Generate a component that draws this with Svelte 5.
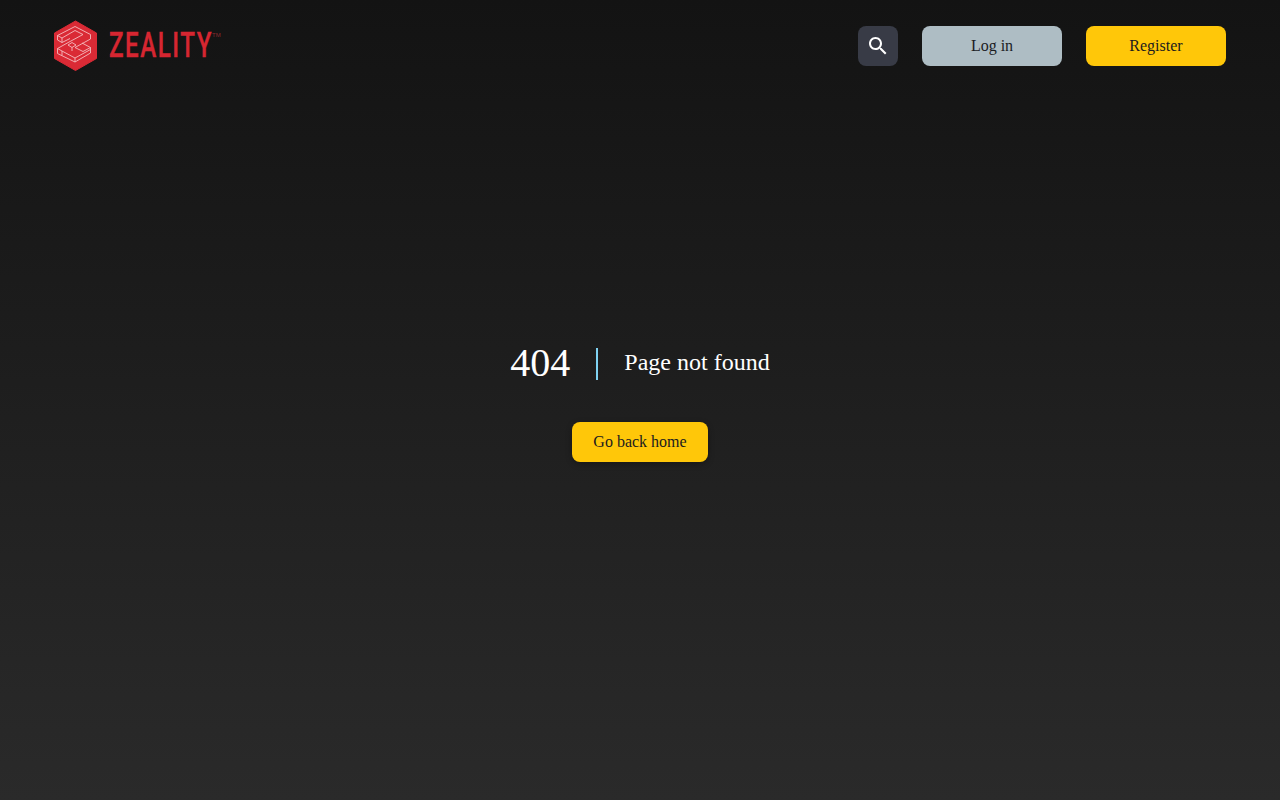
<script lang="ts">
  let query = $state("");
</script>

<div class="page">
  <header class="nav">
    <a class="brand" href="/" aria-label="Zeality">
      <svg class="mark" width="44" height="52" viewBox="0 0 44 52">
        <path d="M21.5 1 L42.5 13 V38.5 L21.5 50.5 L0.5 38.5 V13 Z" fill="#da2a35" stroke="#da2a35" stroke-linejoin="round" />
        <g fill="none" stroke="#f5bcc0" stroke-width="0.9" stroke-linejoin="round">
          <!-- top bar of the Z -->
          <path d="M3.5 15.5 L21 6.5 L36.5 14.5 V19 L21 27.5" />
          <path d="M3.5 15.5 V20 L8 22.5 L16 18.5 M3.5 15.5 L8 18 V22.5 M8 18 L21 10.5 L29 14.5 L16 21.5 L3.5 28.5" />
          <!-- bottom bar of the Z -->
          <path d="M3.5 28.5 V33.5 L21 42 L36.5 33 V27.5 L28 23" />
          <path d="M3.5 28.5 L8 31 L21 38 L36.5 29.5 M8 31 V35.5 M21 38 V42 M21 27.5 L29 31.5 L36.5 27.5" />
          <!-- crossing in the middle -->
          <path d="M14 25 L18 22.5 L22 25 L18 27.5 Z M18 27.5 V31" />
        </g>
      </svg>
      <span class="word">ZEALITY</span>
      <span class="tm">TM</span>
    </a>
    <div class="actions">
      <button class="icon" aria-label="Search" title={query}>
        <svg width="24" height="24" viewBox="0 0 24 24" fill="#fff">
          <path d="M15.5 14h-.79l-.28-.27C15.41 12.59 16 11.11 16 9.5 16 5.91 13.09 3 9.5 3S3 5.91 3 9.5 5.91 16 9.5 16c1.61 0 3.09-.59 4.23-1.57l.27.28v.79l5 4.99L20.49 19l-4.99-5zm-6 0C7.01 14 5 11.99 5 9.5S7.01 5 9.5 5 14 7.01 14 9.5 11.99 14 9.5 14z" />
        </svg>
      </button>
      <button class="btn login">Log in</button>
      <button class="btn register">Register</button>
    </div>
  </header>

  <main class="content">
    <div class="message">
      <span class="code">404</span>
      <span class="divider"></span>
      <span class="text">Page not found</span>
    </div>
    <button class="btn home">Go back home</button>
  </main>
</div>

<style>
  :global(body) {
    margin: 0;
    background: #2a2a2a;
  }

  .page {
    height: 800px;
    overflow: hidden;
    display: flex;
    flex-direction: column;
    background: linear-gradient(to bottom, #131313, #2a2a2a);
    font-family: "Liberation Serif", "Times New Roman", serif;
  }

  .nav {
    height: 92px;
    flex: none;
    box-sizing: border-box;
    padding: 0 54px;
    display: flex;
    align-items: center;
    justify-content: space-between;
  }

  .brand {
    display: flex;
    align-items: center;
    text-decoration: none;
    color: #d62631;
  }

  .mark {
    display: block;
    margin-right: 11px;
  }

  .word {
    font-family: "Roboto", "Liberation Sans", sans-serif;
    font-size: 35px;
    line-height: 32px;
    font-weight: 500;
    letter-spacing: 2.2px;
    width: 104px;
    -webkit-text-stroke: 0.4px #d62631;
    transform: scaleX(0.69);
    transform-origin: left center;
  }

  .tm {
    font-family: "Liberation Sans", sans-serif;
    font-size: 6px;
    color: #8c2a2f;
    align-self: flex-start;
    margin: 12px 0 0 -1px;
    width: 9px;
  }

  .actions {
    display: flex;
    align-items: center;
    gap: 24px;
  }

  button {
    border: none;
    padding: 0;
    font-family: inherit;
    font-size: 16px;
    cursor: pointer;
  }

  .icon {
    width: 40px;
    height: 40px;
    border-radius: 8px;
    background: #383b46;
    display: flex;
    align-items: center;
    justify-content: center;
  }

  .btn {
    height: 40px;
    border-radius: 8px;
    color: #1b1b1f;
  }

  .login {
    width: 140px;
    background: #aebdc4;
  }

  .register {
    width: 140px;
    background: #ffc709;
  }

  .content {
    display: flex;
    flex-direction: column;
    align-items: center;
    padding-top: 248px;
  }

  .message {
    display: flex;
    align-items: center;
    height: 48px;
    color: #fff;
  }

  .code {
    font-size: 40px;
    line-height: 48px;
    margin-top: -3px;
  }

  .divider {
    width: 2px;
    height: 32px;
    margin: 0 26px;
    background: #7fd2f2;
  }

  .text {
    font-size: 24px;
    line-height: 28px;
    margin-top: -4px;
  }

  .home {
    width: 136px;
    margin-top: 34px;
    background: #ffc709;
    box-shadow: 0 2px 6px rgba(0, 0, 0, 0.3);
  }
</style>
